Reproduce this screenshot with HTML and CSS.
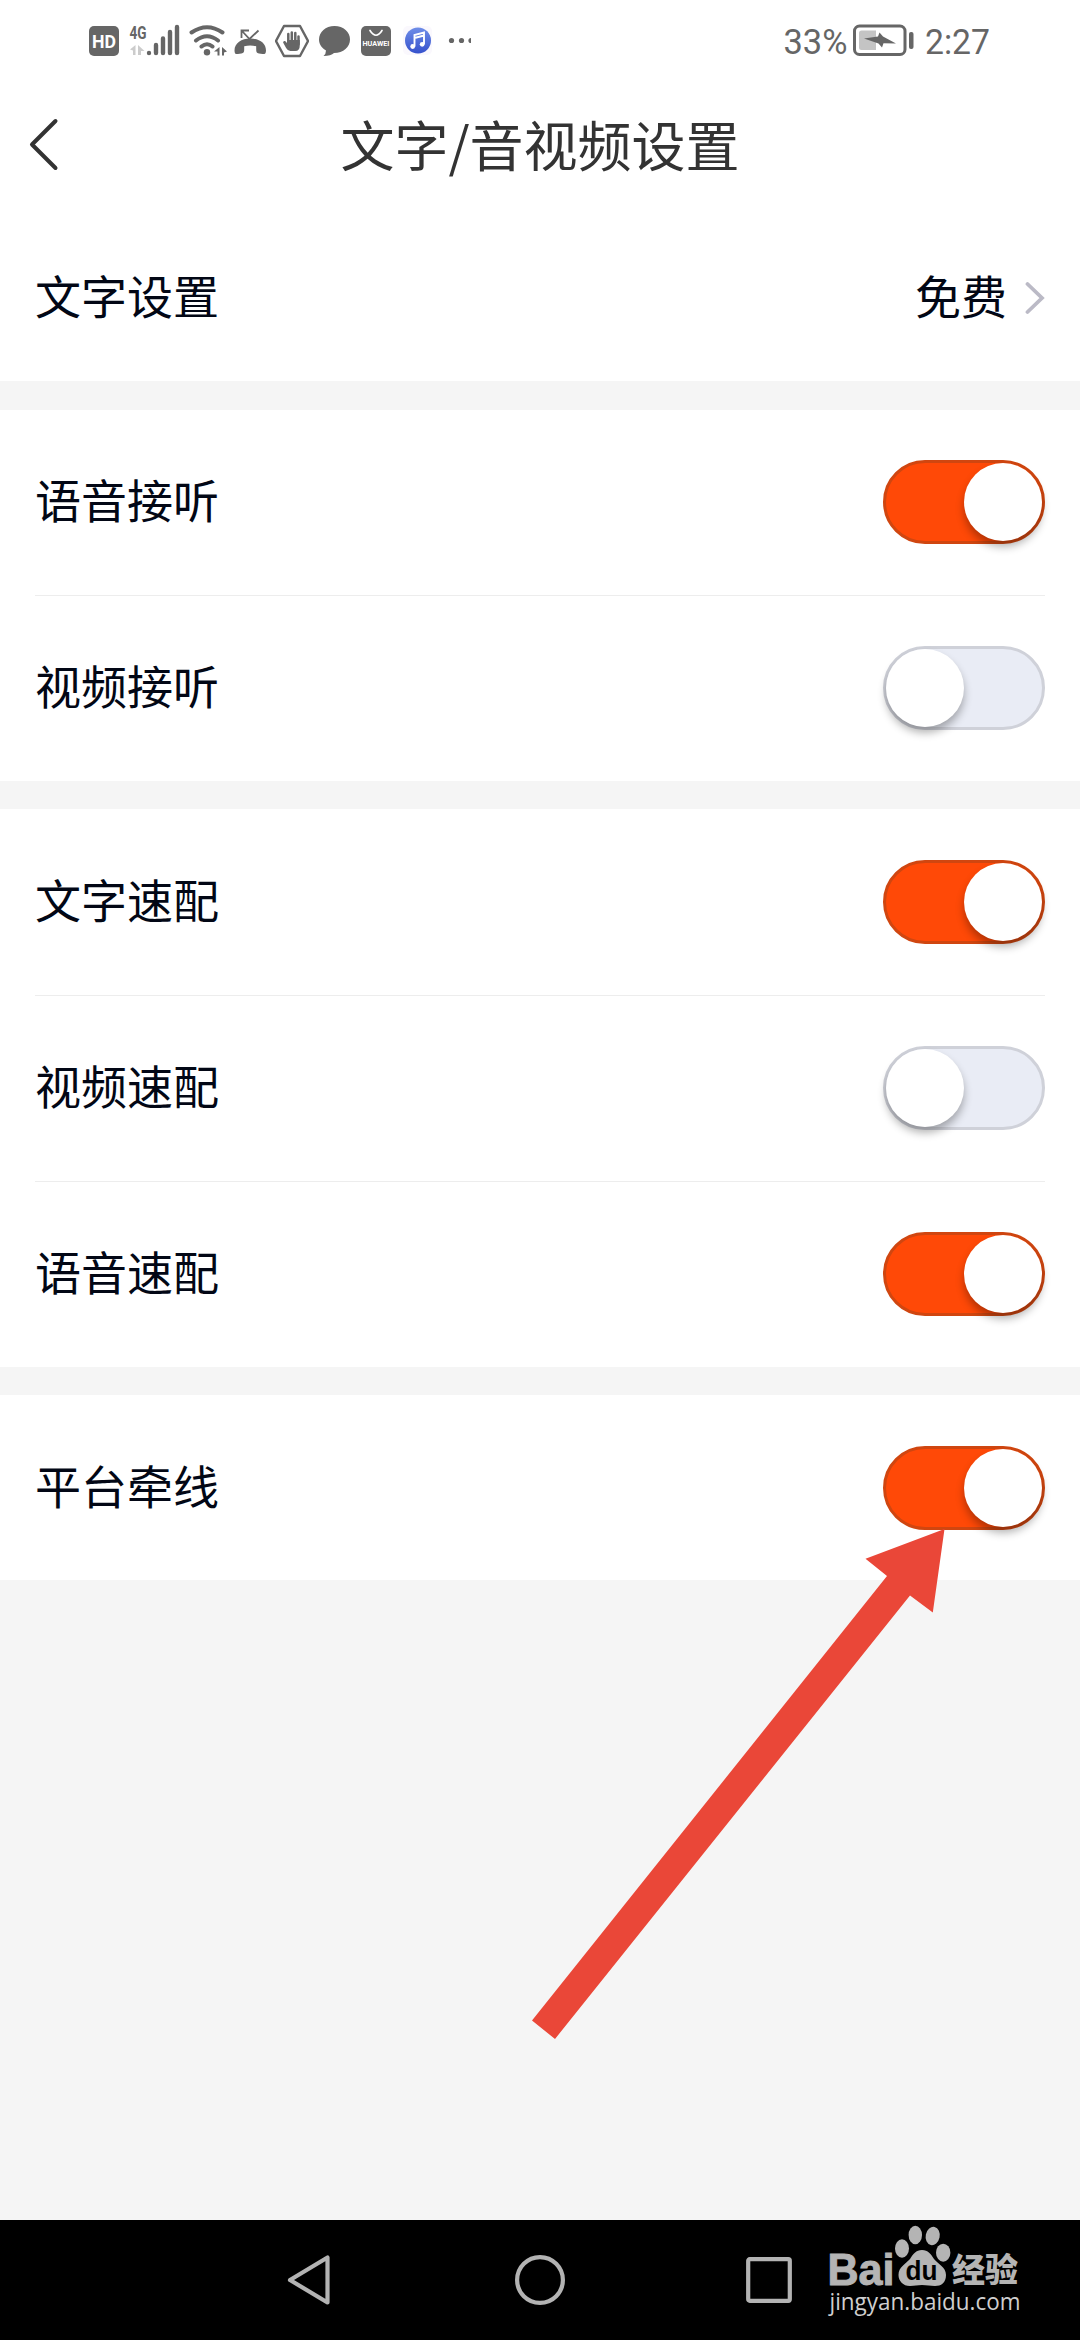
FILE: index.html
```html
<!DOCTYPE html>
<html lang="zh-CN">
<head>
<meta charset="utf-8">
<title>文字/音视频设置</title>
<link rel="stylesheet" href="styles.css">
</head>
<body>
<div class="screen">
  <div class="status">
    <div class="status-left">
      <svg class="ic" width="30" height="34" viewBox="89 24 30 34"><rect x="89" y="26" width="30" height="30" rx="5" fill="#666"/><text x="92" y="47.500" class="hd" textLength="24" lengthAdjust="spacingAndGlyphs">HD</text></svg>
      <svg class="ic" width="52" height="34" viewBox="128 24 52 34"><text x="129.500" y="38.500" class="g4" textLength="17" lengthAdjust="spacingAndGlyphs">4G</text><path d="M135.500 45v10h-2.500v-4.500l-3-1zM138 55V45l6.500 6h-3.500v4z" fill="#ccc"/><g stroke="#666" stroke-width="4.400" stroke-linecap="round"><path d="M149 53v.1M156 45v8M163 38.500V53M170 32v21M177 27v26"/></g></svg>
      <svg class="ic ic-wifi" width="39" height="34" viewBox="189 24 39 34"><g fill="none" stroke="#666" stroke-width="4" stroke-linecap="round"><path d="M191.500 32.500q15.500-10.500 31 0M196 40.500q11-8.500 22 0M201.500 46.500q5.500-4.500 11 0"/></g><circle cx="207" cy="52.200" r="3.200" fill="#666"/><path d="M219.500 47v8.500h-2v-4h-3.500zM222 55.500V47l5 4.500-3 1v3z" fill="#666"/></svg>
      <svg class="ic ic-call" width="33" height="34" viewBox="234 24 33 34"><path d="M241.500 38v-7.500h7.500M242 31l7.500 8 9-8.500" fill="none" stroke="#666" stroke-width="1.800"/><path d="M234.500 50.500c0-7.500 7-12 15.800-12s15.700 4.500 15.700 12c0 3.500-1.500 3.700-3.500 3.500l-3.500-.4c-2.500-.4-2.800-1.800-2.800-4.300v-3q-6-1.800-12 0v3c0 2.500-.3 3.900-2.800 4.300l-3.500.4c-2 .2-3.400 0-3.400-3.500z" fill="#666"/></svg>
      <svg class="ic ic-hand" width="34" height="34" viewBox="275 24 34 34"><path d="M284 26h16l8 15-8 15h-16l-8-15z" fill="none" stroke="#666" stroke-width="2.400" stroke-linejoin="round"/><path d="M288.300 43V34M291.800 42V32.500M295.300 42V33M298.500 44V36.500" stroke="#666" stroke-width="2.500" stroke-linecap="round"/><path d="M287 40h12.800v5q0 6-4.500 6h-5q-2.500 0-4.200-3l-3-5.500q0-2 2-1.500l1.900 2z" fill="#666"/></svg>
      <svg class="ic" width="32" height="34" viewBox="319 24 32 34"><path d="M334.500 26c9 0 15.500 6 15.500 13.500S343.500 53 334 53q-3 3-10.500 3 2.500-2 2.500-5.500c-4-2.500-7-6-7-11C319 32 325.500 26 334.500 26z" fill="#666"/></svg>
      <svg class="ic" width="30" height="34" viewBox="361 24 30 34"><rect x="361" y="26" width="30" height="30" rx="5" fill="#666"/><path d="M370 30.500q6 9.500 12 0" fill="none" stroke="#fff" stroke-width="1.700" stroke-linecap="round"/><text x="362.500" y="46" class="hw" textLength="27" lengthAdjust="spacingAndGlyphs">HUAWEI</text></svg>
      <svg class="ic ic-music" width="30" height="34" viewBox="403 24 30 34"><defs><linearGradient id="mg" x1="0" y1="0" x2="0" y2="1"><stop offset="0" stop-color="#6f8ee8"/><stop offset="1" stop-color="#3551cc"/></linearGradient></defs><rect x="403" y="26" width="29" height="29" rx="5" fill="#faf8fd"/><circle cx="418" cy="40.500" r="13" fill="url(#mg)"/><path d="M414.500 46.500V35l9.500-2.500v11.500M414.500 38l9.500-2.500" fill="none" stroke="#fff" stroke-width="1.900"/><circle cx="412.700" cy="46.500" r="2.400" fill="#fff"/><circle cx="422.200" cy="44.300" r="2.400" fill="#fff"/></svg>
      <svg class="ic ic-more" width="23" height="34" viewBox="448 24 23 34" fill="#666"><circle cx="451.500" cy="40.500" r="2.600"/><circle cx="461.500" cy="40.500" r="2.600"/><circle cx="471" cy="40.500" r="2.600"/></svg>
    </div>
    <div class="status-right">
      <svg class="wide" width="66" height="40" viewBox="783 21 66 40"><text x="783.500" y="54" class="st" textLength="64" lengthAdjust="spacingAndGlyphs">33%</text></svg>
      <svg class="ic-bat" width="62" height="40" viewBox="853 21 62 40"><rect x="854.500" y="26" width="50.500" height="28.500" rx="5" fill="none" stroke="#666" stroke-width="3"/><path d="M859 33q0-2.500 2.500-2.500H876V50h-14.500q-2.500 0-2.500-2.500z" fill="#c4c4c4"/><path d="M864 38.500l14-2 1.500-4 3.500 4 13 7-12.500-.3-1.500 4.300-3.500-4z" fill="#666"/><rect x="909" y="32" width="4.500" height="17" rx="2" fill="#666"/></svg>
      <svg class="ic-time wide" width="66" height="40" viewBox="925 21 66 40"><text x="925" y="54" class="st" textLength="65" lengthAdjust="spacingAndGlyphs">2:27</text></svg>
    </div>
  </div>
  <header class="header">
    <svg class="back" width="32" height="56" viewBox="28 117 32 56"><path d="M55.500 121L32 144.500 55.500 168" fill="none" stroke="#333" stroke-width="4" stroke-linecap="round" stroke-linejoin="round"/></svg>
    <h1 class="title">文字/音视频设置</h1>
  </header>
  <main class="list">
    <section class="group group-first">
      <div class="row"><span class="label">文字设置</span><span class="value">免费</span><svg class="chev" width="20" height="34" viewBox="0 0 20 34"><path d="M2.500 3l14.500 14L2.500 31" fill="none" stroke="#bbbac6" stroke-width="3.800" stroke-linecap="round"/></svg></div>
    </section>
    <section class="group group-calls">
      <div class="row"><span class="label">语音接听</span><span class="switch on"><i class="thumb"></i></span></div>
      <div class="row"><span class="label">视频接听</span><span class="switch"><i class="thumb"></i></span></div>
    </section>
    <section class="group">
      <div class="row"><span class="label">文字速配</span><span class="switch on"><i class="thumb"></i></span></div>
      <div class="row"><span class="label">视频速配</span><span class="switch"><i class="thumb"></i></span></div>
      <div class="row"><span class="label">语音速配</span><span class="switch on"><i class="thumb"></i></span></div>
    </section>
    <section class="group group-last">
      <div class="row"><span class="label">平台牵线</span><span class="switch on"><i class="thumb"></i></span></div>
    </section>
  </main>
  <nav class="nav">
    <svg width="44" height="52" viewBox="0 0 44 52"><path d="M40.500 3.500v45L3 26z" class="nav-line"/></svg>
    <svg class="nav-home" width="50" height="52" viewBox="0 0 50 52"><circle cx="25" cy="26" r="22.900" class="nav-line"/></svg>
    <svg class="nav-recent" width="46" height="52" viewBox="0 0 46 52"><rect x="2.200" y="5.200" width="41.600" height="41.600" rx="1.500" class="nav-line"/></svg>
  </nav>
  <svg class="arrow" width="420" height="520" viewBox="530 1524 420 520"><path d="M944.500 1529L865.500 1558.800 887 1576 532 2020.500 555 2039 910 1595.500 932.800 1612.500z" fill="#ea4738"/></svg>
  <svg class="mark" width="200" height="96" viewBox="826 2224 200 96">
    <g fill="#b4b4b4">
      <text x="827.500" y="2284.500" class="bai" textLength="67" lengthAdjust="spacingAndGlyphs">Bai</text>
      <ellipse cx="902" cy="2248.500" rx="7" ry="9.200"/><ellipse cx="915.300" cy="2235" rx="6.700" ry="9.300"/><ellipse cx="932.700" cy="2236" rx="7" ry="9.200" transform="rotate(12 932.700 2236)"/><ellipse cx="943.200" cy="2252.700" rx="7.200" ry="9"/>
      <path d="M922 2250c6 0 9 4 12 9 4 5 12 8 12 16s-5 11-11 11c-5 0-8-1-13-1s-7 1-12 1c-7 0-11.500-5-11.500-11 0-8 7-11 11.500-16 3-5 6-9 12-9z"/>
      <text x="952" y="2281.500" class="exp" textLength="66" lengthAdjust="spacingAndGlyphs">经验</text>
    </g>
    <text x="905.500" y="2279.500" class="du" textLength="32" lengthAdjust="spacingAndGlyphs">du</text>
    <text x="829.500" y="2310" class="url" textLength="191" lengthAdjust="spacingAndGlyphs">jingyan.baidu.com</text>
  </svg>
</div>
</body>
</html>
```
FILE: styles.css
```css
* { box-sizing: border-box; }
body { margin: 0; font-family: "Noto Sans CJK SC", "Noto Sans", sans-serif; }
svg { display: block; flex: none; }
.screen {
  position: relative;
  display: flex;
  flex-direction: column;
  width: 1080px;
  height: 2340px;
  overflow: hidden;
  background: #f5f5f5;
}
.status {
  display: flex;
  justify-content: space-between;
  align-items: center;
  height: 82px;
  padding: 0 89px;
  background: #fff;
}
.status-left { display: flex; gap: 9px; }
.wide { overflow: visible; }
.ic-call { margin-left: -3px; }
.ic-hand { margin-left: -1px; }
.ic-hand + .ic { margin-left: 1px; }
.ic-hand + .ic + .ic { margin-left: 1px; }
.ic-music { margin-left: 3px; }
.ic-more { margin-left: 6px; }
.status-right { display: flex; gap: 4px; }
.ic-time { margin-left: 6px; }
.hd { font: bold 18px "Roboto", sans-serif; fill: #fff; }
.g4 { font: bold 18px "Roboto", sans-serif; fill: #666; }
.hw { font: bold 7px "Roboto", sans-serif; fill: #fff; }
.st { font: 35px "Roboto", sans-serif; fill: #666; }
.header {
  display: grid;
  grid-template-columns: 60px 1fr 60px;
  align-items: center;
  height: 126px;
  background: #fff;
}
.back { margin-left: 28px; }
.title {
  margin: 0;
  padding-bottom: 3px;
  font-size: 54px;
  line-height: 80px;
  font-weight: 400;
  color: #333;
  text-align: center;
}
.list { display: flex; flex-direction: column; gap: 28px; }
.group { padding: 0 35px; background: #fff; }
.group-first { height: 173px; margin-bottom: 1px; }
.row {
  display: flex;
  align-items: center;
  height: 186px;
}
.row + .row { padding-bottom: 1px; border-top: 1px solid #ededed; }
.group-first .row { height: 179px; }
.group-calls .row:first-child { height: 185px; padding-bottom: 1px; }
.group-last .row { height: 185px; padding-top: 1px; }
.label, .value {
  padding-bottom: 8px;
  font-size: 46px;
  line-height: 68px;
  color: #020715;
}
.label { flex: 1; }
.value { margin-right: 18px; }
.switch {
  display: flex;
  width: 162px;
  height: 84px;
  border: 3px solid #cfd1d9;
  border-radius: 42px;
  background: #e9ecf5;
}
.switch.on {
  justify-content: flex-end;
  border-color: #d04610;
  background: #ff4907;
}
.thumb {
  width: 78px;
  height: 78px;
  border-radius: 50%;
  background: #fff;
  box-shadow: 0 6px 9px rgba(0, 0, 0, .3);
}
.nav {
  display: flex;
  align-items: center;
  height: 120px;
  margin-top: auto;
  padding-left: 287px;
  background: #000;
}
.nav-line { fill: none; stroke: #b3b3b3; stroke-width: 4.200; stroke-linejoin: round; }
.nav-home { margin-left: 184px; }
.nav-recent { margin-left: 181px; }
.arrow { position: absolute; left: 530px; top: 1524px; }
.mark { position: absolute; left: 826px; top: 2224px; }
.bai { font: bold 44px "Liberation Sans", sans-serif; stroke: #b4b4b4; stroke-width: 1px; }
.du { font: bold 27px "Liberation Sans", sans-serif; fill: #000; }
.exp { font: 900 33px "Noto Sans CJK SC", sans-serif; }
.url { font: 24px "Open Sans", sans-serif; fill: #cfcfcf; }
```
